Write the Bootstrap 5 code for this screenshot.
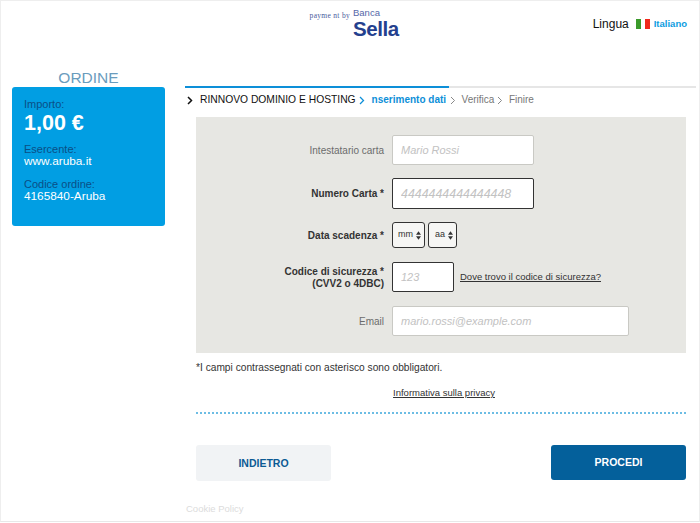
<!DOCTYPE html>
<html lang="it">
<head>
  <meta charset="UTF-8" />
  <meta name="viewport" content="width=device-width, initial-scale=1" />
  <title>Banca Sella - Pagamento</title>
  <link href="https://cdn.jsdelivr.net/npm/bootstrap@5.3.0/dist/css/bootstrap.min.css" rel="stylesheet" />
  <style>
    html, body { height: 100%; overflow: hidden; }
    body { font-family: "Liberation Sans", Arial, sans-serif; font-size: 11px; color: #333; background: #fff; }

    .page-frame { width: 700px; height: 522px; border: 1px solid #eeeeee; border-bottom-color: #e8e8e8; }

    /* header */
    .top-bar { height: 68px; padding-top: 6px; }
    .paid-by { width: 349px; padding-top: 3px; text-align: right; font-family: "Liberation Serif", serif; font-size: 7.5px; letter-spacing: .3px; color: #4a5a9c; }
    .sella-logo { margin-left: 3px; color: #24408e; line-height: 1; }
    .sella-logo span { display: block; }
    .sella-small { font-size: 9.5px; color: #5568a8; height: 10px; margin-top: 1px; }
    .sella-big { font-size: 20.5px; font-weight: 700; letter-spacing: -.4px; margin-top: 1px; }
    .lang-box { padding: 8px 12px 0 0; }
    .lang-label { font-size: 12px; color: #111; margin-right: 7px; }
    .flag-it { width: 14px; height: 10px; margin-right: 4px; background: linear-gradient(90deg, #3b9a2b 0 36%, #fff 36% 64%, #f0291c 64%); }
    .lang-link { font-size: 9.5px; font-weight: 700; color: #0d9ddf; text-decoration: none; }

    /* sidebar */
    .order-side { width: 153px; margin-left: 11px; }
    .order-title { font-size: 15.5px; color: #6a9cbd; text-align: center; height: 18px; line-height: 17px; }
    .order-box { height: 139px; background: #019ee3; border-radius: 3px; padding: 11px 12px; color: #fff; font-size: 11.8px; line-height: 13px; }
    .order-key { color: #0a4f86; font-size: 11px; line-height: 12px; }
    .order-amount { font-size: 21.5px; font-weight: 700; line-height: 26px; margin-bottom: 7px; }
    .order-val { margin-bottom: 10px; }

    /* steps */
    .pay-main { width: 511px; margin-left: 20px; padding-top: 17px; }
    .step-track { height: 2px; background: #e6e6e6; margin-bottom: 5px; }
    .step-fill { width: 264px; height: 2px; background: #0d8fd8; }
    .step-line { height: 14px; font-size: 10px; color: #777; line-height: 14px; margin-left: 2px; }
    .step-line svg { flex: none; }
    .step-name { font-size: 10.3px; color: #111; margin: 0 3px 0 7px; }
    .step-now { font-weight: 700; color: #0d8fd8; margin: 0 4px 0 7px; }
    .step-next { margin: 0 3px 0 5.5px; }

    /* form */
    .card-panel { margin: 10px 10px 0 11px; height: 236px; padding-top: 18px; background: #e7e7e3; }
    .pay-row { margin-bottom: 13px; }
    .pay-row.wide-gap { margin-bottom: 14px; }
    .pay-label { width: 188px; margin: 0 8px 0 0; padding-top: 1px; text-align: right; font-size: 10px; line-height: 12px; color: #6c6c6c; flex: none; }
    .pay-label.needed { font-weight: 700; color: #333; }
    .pay-input.form-control { height: 30px; padding: 0 8px; font-size: 11px; font-style: italic; background: #fff; border: 1px solid #c9c9c4; border-radius: 2px; box-shadow: none; }
    .pay-input::placeholder { color: #c2c2c2; }
    .pay-input.strong-edge { border: 1px solid #333; }
    .pay-input.card-number { height: 31px; font-size: 12.4px; }
    .w-holder { width: 142px; }
    .w-code { width: 62px; }
    .w-mail { width: 237px; }
    .pay-select.form-select { height: 26px; padding: 0 0 0 5px; font-size: 9px; font-weight: 400; color: #333; border: 1px solid #333; border-radius: 3px; background-color: #f6f6f4; background-position: right 3px center; background-size: 5px 9px; background-image: url("data:image/svg+xml,%3Csvg xmlns='http://www.w3.org/2000/svg' viewBox='0 0 6 10'%3E%3Cpath d='M3 0 6 4H0zM3 10 0 6h6z' fill='%23333'/%3E%3C/svg%3E"); }
    .w-month { width: 33px; }
    .pay-select.form-select.w-year { width: 29px; padding-left: 6px; margin-left: 3px; }
    .cvv-help { margin-left: 6px; color: #333; font-size: 9.5px; }

    .note-text { margin: 8px 0 0 11px; font-size: 10.2px; line-height: 13px; color: #333; }
    .privacy-line { margin: 13px 10px 0 11px; padding-left: 6px; height: 12px; line-height: 12px; text-align: center; font-size: 9.5px; }
    .privacy-line a { color: #333; }
    .dot-rule { margin: 13px 10px 0 11px; border-top: 2px dotted #6dbde4; }
    .pay-actions { margin: 31px 10px 0 11px; }
    .back-btn.btn, .next-btn.btn { width: 135px; font-size: 10.5px; font-weight: 700; border-radius: 3px; border: 0; padding: 0; }
    .back-btn.btn { height: 36px; background: #f1f3f5; color: #0c5a94; padding-top: 1px; }
    .next-btn.btn { height: 35px; background: #04609b; color: #fff; }
    .cookie-link { margin: 22px 0 0 1px; font-size: 9.5px; line-height: 12px; color: #dcdcdc; text-decoration: none; display: block; }
  </style>
</head>

<body>
  <div class="page-frame">
    <header class="top-bar d-flex">
      <div class="paid-by">payme nt by</div>
      <div class="sella-logo">
        <span class="sella-small">Banca</span>
        <span class="sella-big">Sella</span>
      </div>
      <div class="lang-box d-flex align-items-center align-self-start ms-auto">
        <span class="lang-label">Lingua</span>
        <span class="flag-it d-inline-block"></span>
        <a class="lang-link" href="#">Italiano</a>
      </div>
    </header>

    <div class="d-flex">
      <aside class="order-side">
        <div class="order-title">ORDINE</div>
        <div class="order-box">
          <div class="order-key">Importo:</div>
          <div class="order-amount">1,00 €</div>
          <div class="order-key">Esercente:</div>
          <div class="order-val">www.aruba.it</div>
          <div class="order-key">Codice ordine:</div>
          <div class="order-val">4165840-Aruba</div>
        </div>
      </aside>

      <main class="pay-main">
        <div class="step-track"><div class="step-fill"></div></div>
        <div class="step-line d-flex align-items-center">
          <svg width="6" height="9" viewBox="0 0 6 9"><path d="M1 1l3.500 3.500L1 8" fill="none" stroke="#111" stroke-width="1.500"/></svg>
          <span class="step-name">RINNOVO DOMINIO E HOSTING</span>
          <svg width="6" height="9" viewBox="0 0 6 9"><path d="M1 1l3.500 3.500L1 8" fill="none" stroke="#0d8fd8" stroke-width="1.300"/></svg>
          <span class="step-now">nserimento dati</span>
          <svg width="6" height="9" viewBox="0 0 6 9"><path d="M1 1l3.500 3.500L1 8" fill="none" stroke="#888" stroke-width="1"/></svg>
          <span class="step-next">Verifica</span>
          <svg width="6" height="9" viewBox="0 0 6 9"><path d="M1 1l3.500 3.500L1 8" fill="none" stroke="#888" stroke-width="1"/></svg>
          <span class="step-next">Finire</span>
        </div>

        <form class="card-panel">
          <div class="pay-row d-flex align-items-center">
            <label class="pay-label" for="holder">Intestatario carta</label>
            <input id="holder" class="form-control pay-input w-holder" type="text" placeholder="Mario Rossi" />
          </div>
          <div class="pay-row d-flex align-items-center">
            <label class="pay-label needed" for="cardNum">Numero Carta *</label>
            <input id="cardNum" class="form-control pay-input strong-edge card-number w-holder" type="text" placeholder="4444444444444448" />
          </div>
          <div class="pay-row wide-gap d-flex align-items-center">
            <label class="pay-label needed" for="month">Data scadenza *</label>
            <select id="month" class="form-select pay-select w-month"><option>mm</option></select>
            <select class="form-select pay-select w-year" aria-label="Anno"><option>aa</option></select>
          </div>
          <div class="pay-row wide-gap d-flex align-items-center">
            <label class="pay-label needed" for="cvv">Codice di sicurezza *<br />(CVV2 o 4DBC)</label>
            <input id="cvv" class="form-control pay-input strong-edge w-code" type="text" placeholder="123" />
            <a class="cvv-help" href="#">Dove trovo il codice di sicurezza?</a>
          </div>
          <div class="pay-row d-flex align-items-center">
            <label class="pay-label" for="mail">Email</label>
            <input id="mail" class="form-control pay-input w-mail" type="text" placeholder="mario.rossi@example.com" />
          </div>
        </form>

        <p class="note-text">*I campi contrassegnati con asterisco sono obbligatori.</p>
        <div class="privacy-line"><a href="#">Informativa sulla privacy</a></div>
        <div class="dot-rule"></div>
        <div class="pay-actions d-flex justify-content-between align-items-start">
          <button class="btn back-btn" type="button">INDIETRO</button>
          <button class="btn next-btn" type="button">PROCEDI</button>
        </div>
        <a class="cookie-link" href="#">Cookie Policy</a>
      </main>
    </div>
  </div>

  <script src="https://cdn.jsdelivr.net/npm/bootstrap@5.3.0/dist/js/bootstrap.bundle.min.js"></script>
</body>
</html>
